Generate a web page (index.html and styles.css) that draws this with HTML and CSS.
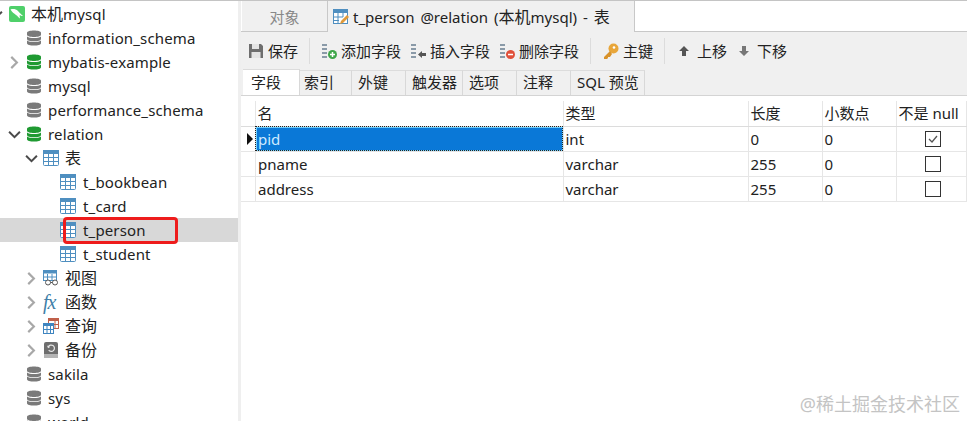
FILE: index.html
```html
<!DOCTYPE html>
<html lang="zh">
<head>
    <meta charset="UTF-8">
    <title>t_person @relation (本机mysql) - 表</title>
    <link rel="stylesheet" href="styles.css">
</head>
<body>
    <svg class="defs" width="0" height="0">
        <symbol id="db" viewBox="0 0 16 16">
            <path d="M1 2.800C1 1.200 4.300 .4 8 .4s7 .8 7 2.400V4.800C15 6.200 11.700 7 8 7S1 6.200 1 4.800Z" fill="currentColor"/>
            <path d="M1 6.400C2.500 7.500 5 7.900 8 7.900s5.500-.4 7-1.500v2.600C15 10.500 11.700 11.300 8 11.300S1 10.500 1 9Z" fill="currentColor"/>
            <path d="M1 10.600C2.500 11.700 5 12.100 8 12.100s5.500-.4 7-1.500v2.600c0 1.600-3.300 2.400-7 2.400S1 14.800 1 13.200Z" fill="currentColor"/>
        </symbol>
        <symbol id="tbl" viewBox="0 0 16 16">
            <rect x=".5" y=".5" width="15" height="15" rx="1" fill="#fff" stroke="#4f8fc0"/>
            <rect x="0" y="0" width="16" height="4" fill="#4f8fc0"/>
            <path d="M5.500 4v11M10.500 4v11M1 7.500h14M1 11.500h14" stroke="#4f8fc0" fill="none"/>
        </symbol>
        <symbol id="arrow-r" viewBox="0 0 12 12"><path d="M3 .8 8.200 6 3 11.200" fill="none" stroke="#a8a8a8" stroke-width="2"/></symbol>
        <symbol id="arrow-d" viewBox="0 0 12 12"><path d="M1 3.500 6 8.500l5-5" fill="none" stroke="#4a4a4a" stroke-width="1.800"/></symbol>
        <symbol id="lines" viewBox="0 0 16 16">
            <path d="M1 2h5M1 6h5M1 10h5M1 14h5" stroke="#8a9aa8" stroke-width="2" fill="none"/>
        </symbol>
    </svg>

    <div class="app">
        <aside class="tree">
            <div class="node lv0">
                <span class="arrow"><svg class="chev"><use href="#arrow-d"/></svg></span>
                <svg class="ico" viewBox="0 0 16 16"><rect width="16" height="16" rx="2" fill="#4fd06a"/><path d="M1.500 3.500C4 2.500 7 3 9 5c1.500 1.500 2.500 3 5 5-1.500 0-2.500-.2-3.500-.8l.5 3.300C9.500 11.500 8.500 10 7 9 5 7.500 3 6 1.500 3.500Z" fill="#fff"/></svg>
                <span class="name"><span class="zh">本机</span>mysql</span>
            </div>
            <div class="node lv1"><span class="arrow"></span><svg class="ico off"><use href="#db"/></svg><span class="name">information_schema</span></div>
            <div class="node lv1"><span class="arrow"><svg class="chev"><use href="#arrow-r"/></svg></span><svg class="ico on"><use href="#db"/></svg><span class="name">mybatis-example</span></div>
            <div class="node lv1"><span class="arrow"></span><svg class="ico off"><use href="#db"/></svg><span class="name">mysql</span></div>
            <div class="node lv1"><span class="arrow"></span><svg class="ico off"><use href="#db"/></svg><span class="name">performance_schema</span></div>
            <div class="node lv1"><span class="arrow"><svg class="chev"><use href="#arrow-d"/></svg></span><svg class="ico on"><use href="#db"/></svg><span class="name">relation</span></div>
            <div class="node lv2"><span class="arrow"><svg class="chev"><use href="#arrow-d"/></svg></span><svg class="ico"><use href="#tbl"/></svg><span class="name zh">表</span></div>
            <div class="node lv3"><svg class="ico"><use href="#tbl"/></svg><span class="name">t_bookbean</span></div>
            <div class="node lv3"><svg class="ico"><use href="#tbl"/></svg><span class="name">t_card</span></div>
            <div class="node lv3 selected">
                <svg class="ico"><use href="#tbl"/></svg><span class="name">t_person</span>
                <span class="mark"></span>
            </div>
            <div class="node lv3"><svg class="ico"><use href="#tbl"/></svg><span class="name">t_student</span></div>
            <div class="node lv2">
                <span class="arrow"><svg class="chev"><use href="#arrow-r"/></svg></span>
                <svg class="ico" viewBox="0 0 16 16"><rect x=".5" y=".5" width="13" height="10" fill="#fff" stroke="#4f8fc0"/><rect width="14" height="3.500" fill="#4f8fc0"/><path d="M4.500 4v6M9 4v6M1 7h12" stroke="#4f8fc0"/><circle cx="5" cy="12.500" r="2.500" fill="#fff" stroke="#555"/><circle cx="12" cy="12.500" r="2.500" fill="#fff" stroke="#555"/><path d="M7.500 12.500h2" stroke="#555"/></svg>
                <span class="name zh">视图</span>
            </div>
            <div class="node lv2">
                <span class="arrow"><svg class="chev"><use href="#arrow-r"/></svg></span>
                <span class="ico fx"><i>f</i><i>x</i></span>
                <span class="name zh">函数</span>
            </div>
            <div class="node lv2">
                <span class="arrow"><svg class="chev"><use href="#arrow-r"/></svg></span>
                <svg class="ico" viewBox="0 0 16 16"><rect x="5.500" y=".5" width="10" height="10" fill="#fff" stroke="#c0604a"/><rect x="5" width="11" height="3" fill="#c0604a"/><path d="M12 3v7M9 6.500h6" stroke="#c0604a"/><rect x=".5" y="5.500" width="10" height="10" fill="#fff" stroke="#3f85c0"/><rect y="5" width="11" height="3" fill="#3f85c0"/><path d="M4 8v7M7.500 8v7M1 11.500h9" stroke="#3f85c0"/></svg>
                <span class="name zh">查询</span>
            </div>
            <div class="node lv2">
                <span class="arrow"><svg class="chev"><use href="#arrow-r"/></svg></span>
                <svg class="ico" viewBox="0 0 16 16"><rect x="1" width="14" height="16" rx="2" fill="#6e6e6e"/><rect x="1" y="12" width="14" height="4" fill="#b4b4b4"/><path d="M5.300 5a3.200 3.200 0 1 1 .4 3.200" fill="none" stroke="#e8e8e8" stroke-width="1.200"/><path d="M4 3.600 5 6.300 7.200 5Z" fill="#e8e8e8"/></svg>
                <span class="name zh">备份</span>
            </div>
            <div class="node lv1"><span class="arrow"></span><svg class="ico off"><use href="#db"/></svg><span class="name">sakila</span></div>
            <div class="node lv1"><span class="arrow"></span><svg class="ico off"><use href="#db"/></svg><span class="name">sys</span></div>
            <div class="node lv1"><span class="arrow"></span><svg class="ico off"><use href="#db"/></svg><span class="name">world</span></div>
        </aside>

        <main class="main">
            <div class="doc-tabs">
                <div class="doc-tab">对象</div>
                <div class="doc-tab active">
                    <svg class="ico" viewBox="0 0 16 16"><rect x=".5" y=".5" width="14" height="14" fill="#fff" stroke="#4f8fc0"/><rect width="15" height="4" fill="#4f8fc0"/><path d="M5 4v10M10 4v4M1 8h9M1 11.500h5" stroke="#4f8fc0"/><path d="M7 15l1-3 6-6 2 2-6 6Z" fill="#e09a3a"/></svg>
                    <span class="doc-title">t_person @relation (<span class="zh">本机</span>mysql) - <span class="zh">表</span></span>
                </div>
            </div>

            <div class="toolbar">
                <div class="tool">
                    <svg class="ico" viewBox="0 0 16 16"><path d="M1 1h12l2 2v12H1Z" fill="#6e6e6e"/><rect x="4" y="1" width="7" height="5" fill="#e4e4e4"/><rect x="3.500" y="9" width="9" height="6" fill="#e4e4e4"/></svg>
                    保存
                </div>
                <span class="sep"></span>
                <div class="tool">
                    <svg class="ico" viewBox="0 0 16 16"><use href="#lines"/><circle cx="11.500" cy="11.500" r="4.500" fill="#3fa64a"/><path d="M9 11.500h5M11.500 9v5" stroke="#fff" stroke-width="1.500"/></svg>
                    添加字段
                </div>
                <div class="tool">
                    <svg class="ico" viewBox="0 0 16 16"><use href="#lines"/><path d="M8 11.500 12 8v2h4v3h-4v2Z" fill="#555"/></svg>
                    插入字段
                </div>
                <div class="tool">
                    <svg class="ico" viewBox="0 0 16 16"><use href="#lines"/><circle cx="11.500" cy="11.500" r="4.500" fill="#e0503a"/><path d="M9 11.500h5" stroke="#fff" stroke-width="1.500"/></svg>
                    删除字段
                </div>
                <span class="sep"></span>
                <div class="tool key">
                    <svg class="ico" viewBox="0 0 16 16"><circle cx="10.500" cy="5.500" r="5" fill="#e8a63a"/><circle cx="11" cy="4.500" r="1.300" fill="#fff"/><path d="M7 8 1 14v2h3l1-1v-1h2l2-3Z" fill="#d8922a"/></svg>
                    主键
                </div>
                <span class="sep"></span>
                <div class="tool move up">
                    <svg class="mini" viewBox="0 0 10 10"><path d="M5 0 10 5H7v5H3V5H0Z" fill="#555"/></svg>
                    上移
                </div>
                <div class="tool move">
                    <svg class="mini" viewBox="0 0 10 10"><path d="M5 10 0 5h3V0h4v5h3Z" fill="#777"/></svg>
                    下移
                </div>
            </div>

            <div class="sub-tabs">
                <div class="sub-tab active">字段</div>
                <div class="sub-tab first">索引</div>
                <div class="sub-tab">外键</div>
                <div class="sub-tab narrow">触发器</div>
                <div class="sub-tab">选项</div>
                <div class="sub-tab">注释</div>
                <div class="sub-tab narrow">SQL 预览</div>
            </div>

            <table class="fields">
                <colgroup>
                    <col class="c-mark"><col class="c-name"><col class="c-type"><col class="c-len"><col class="c-dec"><col class="c-null">
                </colgroup>
                <thead>
                    <tr><th></th><th>名</th><th>类型</th><th>长度</th><th>小数点</th><th>不是 null</th></tr>
                </thead>
                <tbody>
                    <tr>
                        <td class="marker"><span class="cursor"></span></td>
                        <td class="cell-on">pid</td><td>int</td><td>0</td><td>0</td>
                        <td class="chk"><span class="box"><svg viewBox="0 0 14 14"><path d="M3 7l3 3 5-6" fill="none" stroke="#555" stroke-width="1.300"/></svg></span></td>
                    </tr>
                    <tr>
                        <td class="marker"></td>
                        <td>pname</td><td>varchar</td><td>255</td><td>0</td>
                        <td class="chk"><span class="box"></span></td>
                    </tr>
                    <tr>
                        <td class="marker"></td>
                        <td>address</td><td>varchar</td><td>255</td><td>0</td>
                        <td class="chk"><span class="box"></span></td>
                    </tr>
                </tbody>
            </table>
        </main>
    </div>

    <div class="watermark">@稀土掘金技术社区</div>
</body>
</html>
```

FILE: styles.css
```css
html, body {
    margin: 0;
    padding: 0;
    height: 100%;
    overflow: hidden;
}
body {
    font-family: "Noto Sans", "Noto Sans CJK SC", sans-serif;
    font-size: 15px;
    color: #222;
    background-color: #fff;
}
.defs {
    position: absolute;
}
.app {
    display: flex;
    height: 421px;
    border-top: 1px solid #c4c4c4;
    box-sizing: border-box;
}
svg {
    display: block;
}
.zh {
    font-size: 16px;
}

/* left tree */
.tree {
    width: 238px;
    flex: none;
    padding-top: 1px;
    overflow: hidden;
    border-right: 3px solid #efefef;
}
.node {
    position: relative;
    display: flex;
    align-items: center;
    height: 24px;
    white-space: nowrap;
}
.lv0 { padding-left: 0; }
.lv0 .arrow { width: 9px; }
.lv0 .chev { margin-left: -10px; }
.lv1 { padding-left: 8px; }
.lv2 { padding-left: 25px; }
.lv3 { padding-left: 60px; }
.arrow {
    width: 18px;
    height: 16px;
    flex: none;
    display: flex;
    align-items: center;
    overflow: hidden;
}
.chev {
    width: 13px;
    height: 13px;
    flex: none;
}
.ico {
    width: 16px;
    height: 16px;
    flex: none;
}
.off { color: #7a7a7a; }
.on { color: #1f9a32; }
.name {
    margin-left: 6px;
    line-height: 20px;
    letter-spacing: .15px;
}
.name.zh, .name .zh {
    letter-spacing: 0;
}
.lv3 .name {
    margin-left: 7px;
}
.selected {
    background-color: #d8d8d8;
}
.mark {
    position: absolute;
    left: 63px;
    top: -1px;
    width: 115px;
    height: 27px;
    box-sizing: border-box;
    border: 3px solid #ee1c1c;
    border-radius: 4px;
}
.fx {
    font-family: "Liberation Serif", serif;
    font-size: 20px;
    line-height: 16px;
    color: #3f7fa8;
    letter-spacing: -1px;
}

/* right side */
.main {
    flex: 1;
    min-width: 0;
    display: flex;
    flex-direction: column;
}
.doc-tabs {
    display: flex;
    height: 31px;
    flex: none;
    box-sizing: border-box;
    border-bottom: 1px solid #c8c8c8;
    padding-left: 1px;
}
.doc-tab {
    display: flex;
    align-items: center;
    justify-content: center;
    gap: 4px;
    width: 86px;
    height: 31px;
    box-sizing: border-box;
    background-color: #f0f0f0;
    color: #888;
    border-right: 1px solid #c8c8c8;
    border-bottom: 1px solid #c8c8c8;
}
.doc-tab.active {
    width: 307px;
    justify-content: flex-start;
    padding-left: 5px;
    color: #222;
    border-bottom: none;
}
.doc-title {
    word-spacing: 2px;
    line-height: 20px;
}
.toolbar {
    display: flex;
    align-items: center;
    height: 38px;
    flex: none;
    box-sizing: border-box;
    background-color: #f0f0f0;
    padding-left: 7px;
}
.tool {
    display: flex;
    align-items: center;
    gap: 4px;
    margin-right: 9px;
    line-height: 20px;
    white-space: nowrap;
}
.sep {
    width: 1px;
    height: 26px;
    background-color: #dcdcdc;
    margin: 0 11px 0 2px;
}
.key {
    margin-left: 1px;
}
.move {
    gap: 8px;
    margin-right: 12px;
}
.up {
    margin-left: 3px;
}
.mini {
    width: 10px;
    height: 10px;
}
.sub-tabs {
    display: flex;
    height: 26px;
    flex: none;
    box-sizing: border-box;
    background-color: #f0f0f0;
    border-bottom: 1px solid #d4d4d4;
    padding-left: 2px;
}
.sub-tab {
    display: flex;
    align-items: center;
    padding: 0 17px 2px 6px;
    box-sizing: border-box;
    height: 25px;
    line-height: 20px;
    border-right: 1px solid #d8d8d8;
    border-top: 1px solid #dcdcdc;
    white-space: nowrap;
}
.sub-tab.first {
    padding-left: 4px;
}
.sub-tab.narrow {
    padding-right: 5px;
}
.sub-tab.active {
    background-color: #fff;
    height: 26px;
    margin-top: -1px;
    padding: 0 18px 2px 8px;
}

/* field grid */
.fields {
    border-collapse: collapse;
    table-layout: fixed;
    width: 725px;
    margin-top: 5px;
}
.c-mark { width: 14px; }
.c-name { width: 308px; }
.c-type { width: 185px; }
.c-len { width: 74px; }
.c-dec { width: 74px; }
.c-null { width: 70px; }
.fields th, .fields td {
    height: 25px;
    padding: 0 0 0 2px;
    box-sizing: border-box;
    text-align: left;
    font-weight: normal;
    line-height: 20px;
    border-right: 1px solid #e6e6e6;
    border-bottom: 1px solid #e6e6e6;
    white-space: nowrap;
}
.fields th {
    border-bottom: 1px solid #dcdcdc;
}
.fields .cell-on, .fields tbody tr:nth-child(n+2) td:nth-child(2) {
    padding-left: 2.500px;
}
.fields .marker {
    padding: 0 0 0 6px;
}
.cursor {
    display: block;
    width: 0;
    height: 0;
    border-left: 6px solid #111;
    border-top: 6px solid transparent;
    border-bottom: 6px solid transparent;
}
.fields .cell-on {
    background-color: #0a78d7;
    color: #cfeaff;
    outline: 1px dotted #222;
    outline-offset: -1px;
    box-shadow: inset 0 0 0 1px #6fd0ff;
}
.fields .chk {
    padding: 0;
}
.box {
    display: block;
    width: 16px;
    height: 16px;
    box-sizing: border-box;
    border: 1px solid #333;
    margin-left: 28px;
}
.box svg {
    width: 14px;
    height: 14px;
}
.watermark {
    position: absolute;
    right: 7px;
    bottom: 5px;
    font-size: 18px;
    color: #c4c4c4;
}
```
